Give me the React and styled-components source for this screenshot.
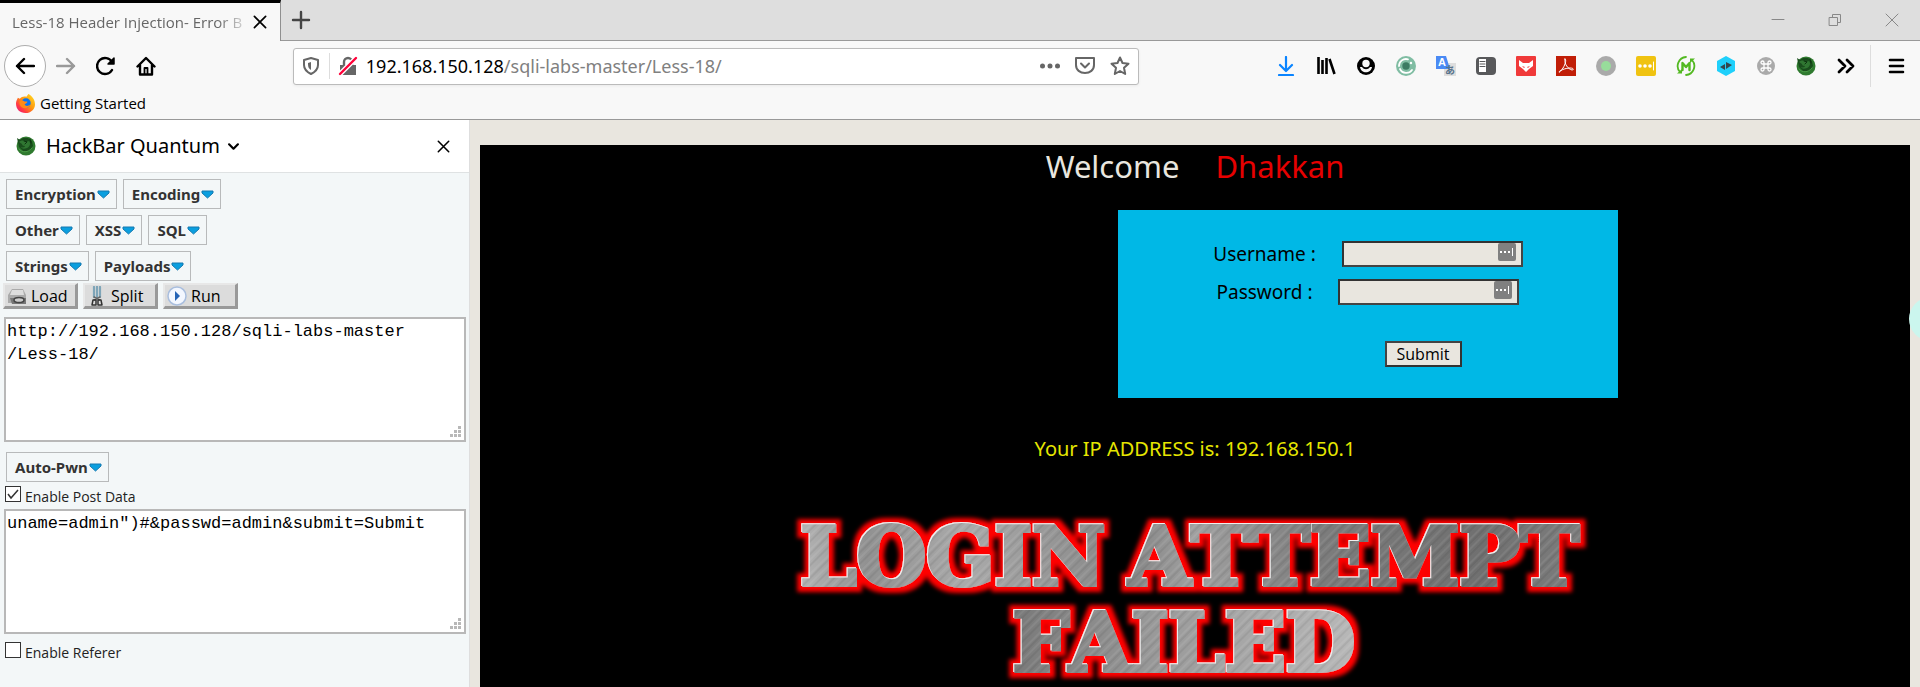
import React from "react";
import styled, { createGlobalStyle } from "styled-components";

const ui = '"Noto Sans", "Open Sans", sans-serif';

const Global = createGlobalStyle`
  *, *::before, *::after { box-sizing: border-box; }
  html, body, #root { height: 100%; }
  body { margin: 0; font-family: ${ui}; background: #f8f8f8; color: #000; overflow: hidden; }
  button { font: inherit; color: inherit; background: none; border: 0; padding: 0; margin: 0; }
  h1, h2, p { margin: 0; font-weight: 400; }
  svg { display: block; flex: none; }
`;

const Window = styled.div`
  height: 100vh;
  display: flex;
  flex-direction: column;
`;

/* tab strip */
const TabStrip = styled.header`
  display: flex;
  height: 41px;
  flex: none;
  background: #dedede;
`;
const Tab = styled.div`
  display: flex;
  align-items: center;
  width: 281px;
  border-top: 3px solid #000;
  border-right: 1px solid #8f8f8f;
  background: #f8f8f8;
  padding: 0 10px 0 12px;
`;
const TabTitle = styled.span`
  flex: 1;
  white-space: nowrap;
  font-family: "Open Sans", sans-serif;
  font-size: 15px;
  line-height: 24px;
  color: #666;
  mask-image: linear-gradient(to right, #000 205px, transparent 240px);
`;
const StripRest = styled.div`
  flex: 1;
  display: flex;
  align-items: center;
  justify-content: space-between;
  border-bottom: 1px solid #999;
  padding: 0 18px 0 10px;
`;
const WindowControls = styled.div`
  display: flex;
  gap: 37px;
`;
const IconButton = styled.button`
  display: flex;
  align-items: center;
  justify-content: center;
  width: 20px;
  height: 20px;
  flex: none;
`;

/* navigation bar */
const NavBar = styled.nav`
  display: flex;
  align-items: center;
  justify-content: space-between;
  height: 50px;
  flex: none;
  padding: 0 14px 0 4px;
`;
const NavButtons = styled.div`
  display: flex;
  align-items: center;
  gap: 20px;
`;
const BackButton = styled(IconButton)`
  width: 42px;
  height: 42px;
  border: 1px solid #adadad;
  border-radius: 50%;
  background: #fff;
  margin-right: -10px;
`;
const UrlBar = styled.div`
  display: flex;
  align-items: center;
  flex: none;
  width: 44.5%;
  height: 37px;
  padding: 0 8px 0 7px;
  gap: 8px;
  background: #fff;
  border: 1px solid #bbb;
  border-radius: 3px;
  box-shadow: 0 1px 3px rgba(0, 0, 0, 0.06);
`;
const Divider = styled.span`
  width: 1px;
  height: 26px;
  background: #ddd;
`;
const MenuDivider = styled(Divider)`
  height: 42px;
  margin: 0 -5px 0 -6px;
`;
const Address = styled.p`
  flex: 1;
  font-size: 18px;
  line-height: 26px;
  color: #808080;
  white-space: nowrap;
  strong { font-weight: 400; color: #000; }
`;
const UrlActions = styled.div`
  display: flex;
  gap: 15px;
`;
const Extensions = styled.div`
  display: flex;
  align-items: center;
  gap: 20px;
`;

const Bookmarks = styled.div`
  height: 29px;
  flex: none;
  padding: 0 16px;
  border-bottom: 1px solid #999;
`;
const Bookmark = styled.a`
  display: inline-flex;
  align-items: center;
  gap: 5px;
  font-family: "Open Sans", sans-serif;
  font-size: 15px;
  line-height: 24px;
  color: #000;
  text-decoration: none;
`;

const Body = styled.div`
  flex: 1;
  min-height: 0;
  display: flex;
`;

/* side panel */
const Sidebar = styled.aside`
  width: 470px;
  flex: none;
  border-right: 1px solid #dedede;
  background: #f3f7f8;
  overflow: hidden;
`;
const SidebarHeader = styled.div`
  display: flex;
  align-items: center;
  height: 53px;
  padding: 0 16px;
  gap: 10px;
  background: #fff;
  border-bottom: 1px solid #dfe2e3;
`;
const SidebarTitle = styled.button`
  display: flex;
  align-items: center;
  gap: 8px;
  flex: 1;
  font-size: 20px;
  line-height: 28px;
`;
const MenuRows = styled.div`
  display: flex;
  flex-direction: column;
  gap: 6px;
  padding: ${(p) => p.$top}px 6px 2px;
`;
const MenuRow = styled.div`
  display: flex;
  gap: 6px;
`;
const MenuButton = styled.button`
  display: flex;
  align-items: center;
  gap: 1px;
  height: 30px;
  padding: 0 6px 0 8px;
  border: 1px solid #b8babb;
  font-weight: 700;
  font-size: 15px;
  color: #333;
`;
const Actions = styled.div`
  display: flex;
  gap: 5px;
  padding: 0 3px;
`;
const ActionButton = styled.button`
  display: flex;
  align-items: center;
  gap: 4px;
  width: 75px;
  height: 26px;
  padding: 0 0 0 2px;
  background: #dcdcdc;
  border: 2px solid;
  border-color: #e8e8e8 #999 #999 #e8e8e8;
  border-width: 2px 3px 3px 2px;
  font-family: "Open Sans", sans-serif;
  font-size: 16px;
`;
const AreaWrap = styled.div`
  position: relative;
  margin: ${(p) => p.$top}px 3px 0 4px;
`;
const Area = styled.textarea`
  display: block;
  width: 100%;
  height: 125px;
  margin: 0;
  padding: 1px;
  border: 2px solid #b8b8b8;
  background: #fff;
  color: #000;
  resize: none;
  outline: none;
  font-family: "Liberation Mono", monospace;
  font-size: 17px;
  line-height: 23px;
`;
const Grip = styled.span`
  position: absolute;
  right: 4px;
  bottom: 4px;
`;
const Check = styled.label`
  display: flex;
  align-items: center;
  gap: 4px;
  padding-left: 5px;
  height: 24px;
  margin-top: ${(p) => p.$top || 0}px;
  font-family: "Open Sans", sans-serif;
  font-size: 14px;
  color: #222;
`;
const Box = styled.input`
  appearance: none;
  width: 16px;
  height: 16px;
  margin: 0 0 4px;
  border: 1px solid #333;
  background: #fff;
  &:checked {
    background: #fff url("data:image/svg+xml,%3Csvg xmlns='http://www.w3.org/2000/svg' viewBox='0 0 14 14'%3E%3Cpath d='M2 7l3 4L12 3' fill='none' stroke='%23333' stroke-width='1.5'/%3E%3C/svg%3E");
  }
`;

/* page */
const Viewport = styled.main`
  flex: 1;
  min-width: 0;
  overflow: hidden;
  padding: 25px 10px 0;
  background: #e9e6df;
  position: relative;
`;
const Page = styled.div`
  min-height: 100%;
  background: #000;
  display: flex;
  flex-direction: column;
`;
const Welcome = styled.h1`
  display: flex;
  justify-content: center;
  gap: 36px;
  font-size: 31px;
  line-height: 42px;
  color: #e9e6df;
`;
const Name = styled.span`
  color: #e60000;
`;
const LoginForm = styled.form`
  display: flex;
  flex-direction: column;
  gap: 12px;
  width: 500px;
  height: 188px;
  margin: 23px 0 0 calc(50% - 77px);
  padding-top: 31px;
  background: #00b8e6;
`;
const Field = styled.div`
  display: flex;
  align-items: center;
  justify-content: center;
  gap: 26px;
  height: 26px;
  font-size: 19px;
  label { white-space: nowrap; }
`;
const InputWrap = styled.span`
  position: relative;
  display: flex;
`;
const TextInput = styled.input`
  width: 181px;
  height: 26px;
  border: 2px solid;
  border-color: #333 #444 #444 #333;
  background: #e9e6df;
  outline: none;
`;
const Badge = styled.span`
  position: absolute;
  right: 7px;
  top: 2px;
`;
const Submit = styled.button`
  align-self: center;
  width: 77px;
  height: 26px;
  margin: 24px 0 0 110px;
  border: 2px solid;
  border-color: #444 #333 #333 #444;
  background: #e9e6df;
  font-family: "Open Sans", sans-serif;
  font-size: 16px;
  line-height: 20px;
`;
const Ip = styled.p`
  margin-top: 36px;
  text-align: center;
  font-size: 20px;
  line-height: 30px;
  color: #e6e600;
`;
const Banner = styled.div`
  display: flex;
  justify-content: center;
  margin-top: 36px;
  svg { overflow: visible; }
`;
const Bubble = styled.span`
  position: absolute;
  right: 0;
  top: 177px;
  width: 11px;
  height: 44px;
  overflow: hidden;
`;

const S = ({ s = 20, children, ...r }) => (
  <svg width={s} height={s} viewBox="0 0 20 20" fill="none" stroke="currentColor" strokeWidth="2.4" strokeLinecap="round" strokeLinejoin="round" aria-hidden="true" {...r}>{children}</svg>
);

const GreenFox = () => (
  <S stroke="none">
    <circle cx="10" cy="10" r="9.5" fill="#2f7a2f" />
    <path d="M1 2l3 2 3-2 5 0 4 3 1 5-4 5-6 0-4-4z" fill="#194d1c" />
    <path d="M3 6c2-2 5-2 7 0l3-1c2 2 1 6-2 7-3 1-5 1-6-1 2 1 4 0 4-1-2 0-3-1-3-2z" fill="#2f7631" />
    <path d="M8 5l3 1-2 2M14 3l1 4" stroke="#0d330f" strokeWidth="1" />
    <path d="M3 13c3 4 9 4 13-1" stroke="#4b9a48" strokeWidth="1" />
  </S>
);
const Firefox = () => (
  <S s={19} stroke="none">
    <defs>
      <linearGradient id="ff" x1="1" y1="0" x2="0" y2="1">
        <stop offset="0" stopColor="#ffe226" /><stop offset=".45" stopColor="#ff980e" /><stop offset=".75" stopColor="#ff3647" /><stop offset="1" stopColor="#e31587" />
      </linearGradient>
    </defs>
    <path d="M2 4l2 1c2-2 4-3 7-2l2-3c4 2 7 6 7 11 0 5-4 9-10 9S0 16 0 10c0-2 1-4 2-6z" fill="url(#ff)" />
    <circle cx="10.5" cy="9.5" r="5" fill="#0a74ef" />
    <path d="M4 7c2-1 4 0 5 1l3 0c0 2-2 2-3 3 1 2 4 2 6 0-1 4-6 5-9 3-2-2-3-4-2-7z" fill="#ff8a16" />
  </S>
);
const Close = ({ s = 14, w = 2.4 }) => <S s={s} strokeWidth={w}><path d="M2 2l16 16M18 2L2 18" /></S>;

const extensions = [
  ["Downloads", <S stroke="#0a84ff" strokeWidth="2.2"><path d="M10 1v13M4 9l6 6 6-6M3 19h14" /></S>],
  ["Library", <S strokeWidth="2.6" strokeLinecap="butt"><path d="M2.500 1v17M6.500 4v14M10.500 2v16M13.500 3l5 15" /></S>],
  ["Account", <S stroke="none"><circle cx="10" cy="10" r="9" fill="#000" /><circle cx="10" cy="7.5" r="3.7" fill="#f8f8f8" /><path d="M4 11c1 7 11 7 12 0h-2c-2 3-6 3-8 0z" fill="#f8f8f8" /></S>],
  ["Proxy", <S stroke="none"><circle cx="10" cy="10" r="10" fill="#80bda3" /><circle cx="10" cy="10" r="3.7" fill="#3c7c63" /><path d="M3 10a7 7 0 0 1 9-6.700M4 13a7 7 0 0 0 12 1" stroke="#fff" strokeWidth="1.8" /><circle cx="15" cy="7" r="1.2" fill="#fff" /></S>],
  ["Translate", <S stroke="none"><path d="M8 7h12v13H8z" fill="#dedede" /><path d="M0 0h10l4 13H0z" fill="#4a8af4" /><text x="2" y="10" fontSize="11" fontWeight="700" fill="#fff" fontFamily="Liberation Sans, sans-serif">A</text><text x="9" y="18" fontSize="10" fontWeight="700" fill="#58738c" fontFamily="Noto Sans CJK JP, sans-serif">あ</text></S>],
  ["Reader", <S stroke="none"><rect y="1" width="20" height="18" rx="4" fill="#58595b" /><path d="M3 3h7v13H3z" fill="#fff" /><path d="M4 5.500h5M4 8h5M4 10.500h5" stroke="#58595b" strokeWidth="1" /></S>],
  ["Fox", <S stroke="none"><rect width="20" height="20" rx="1" fill="#f03a3a" /><path d="M3 4l4 3h6l4-3v6l-4 3-3 3-3-3-4-3z" fill="#fff" /><path d="M6 10l3 1-1 1zM14 10l-3 1 1 1z" fill="#f03a3a" /></S>],
  ["PDF", <S stroke="none"><path d="M0 0h20v20H0z" fill="#c11e07" /><path d="M9 3c2 0 0 6-2 9s-4 5-4 4 6-4 11-4c4 0 4 2 2 2-4-1-8-6-7-11z" stroke="#fff" strokeWidth="1" /></S>],
  ["Status", <S stroke="none"><circle cx="10" cy="10" r="10" fill="#aaa" /><circle cx="10" cy="10" r="5" fill="#98dc9b" /></S>],
  ["Passwords", <S stroke="none"><rect width="20" height="20" rx="2" fill="#f0c311" /><circle cx="4" cy="10" r="1.8" fill="#fff" /><circle cx="9" cy="10" r="1.8" fill="#fff" /><circle cx="14" cy="10" r="1.8" fill="#fff" /><path d="M17.500 6v8" stroke="#fff" strokeWidth="1" /></S>],
  ["Markdown", <S stroke="#53b922" strokeWidth="1.8"><path d="M10 1a9 9 0 0 0-6 15M10 19a9 9 0 0 0 6-15" /><path d="M1 17.500h5V13zM19 2.500h-5V7z" fill="#53b922" stroke="none" /><path d="M6.500 14V7l3.500 4 3.500-4v7" strokeWidth="2.4" /></S>],
  ["Switch", <S stroke="none"><path d="M10 0l9 5v10l-9 5-9-5V5z" fill="#1fd0fb" /><path d="M9 8v6l-5-3zM10 6v7l6-4z" fill="#33474f" /></S>],
  ["Command", <S stroke="none"><circle cx="10" cy="10" r="9" fill="#aaa" /><path d="M8 8h4v4H8zM8 8H6.500A1.500 1.500 0 1 1 8 6.500zM12 8V6.500A1.500 1.500 0 1 1 13.500 8zM12 12h1.500a1.500 1.500 0 1 1-1.500 1.500zM8 12v1.500A1.500 1.500 0 1 1 6.500 12z" stroke="#fff" strokeWidth="1.3" /></S>],
  ["HackBar", <GreenFox />],
  ["More tools", <S strokeWidth="2.8"><path d="M3 4l6 6-6 6M11 4l6 6-6 6" /></S>],
];

const Arrow = () => (
  <svg width="13" height="9" viewBox="0 0 13 9" aria-hidden="true">
    <path d="M1 1h11v2L6.500 8 1 3z" fill="#0a9fdf" stroke="#1479b0" strokeWidth="1" strokeLinejoin="round" />
  </svg>
);
const menus = [["Encryption", "Encoding"], ["Other", "XSS", "SQL"], ["Strings", "Payloads"]];
const Menu = ({ children }) => <MenuButton type="button">{children}<Arrow /></MenuButton>;

const GripDots = () => (
  <Grip><svg width="12" height="12" fill="#b8b8b8" aria-hidden="true"><path d="M8 0h3v3H8zM4 4h3v3H4zM8 4h3v3H8zM0 8h3v3H0zM4 8h3v3H4zM8 8h3v3H8z" /></svg></Grip>
);
const PassBadge = () => (
  <Badge><svg width="18" height="18" aria-hidden="true"><rect width="18" height="18" rx="2" fill="#808080" /><path d="M2 8h2v2H2zM6 8h2v2H6zM10 8h2v2h-2zM14 5h1v8h-1z" fill="#fff" /></svg></Badge>
);

const FailedBanner = () => (
  <svg width="820" height="180" viewBox="0 0 820 180" role="img" aria-label="Login attempt failed">
    <defs>
      <linearGradient id="metal" gradientUnits="userSpaceOnUse" x1="0" y1="0" x2="820" y2="0">
        <stop offset="0" stopColor="#bbb" /><stop offset=".1" stopColor="#919191" /><stop offset=".22" stopColor="#aaa" /><stop offset=".42" stopColor="#858585" /><stop offset=".5" stopColor="#a0a0a0" /><stop offset=".65" stopColor="#7c7c7c" /><stop offset=".85" stopColor="#707070" /><stop offset="1" stopColor="#808080" />
      </linearGradient>
      <linearGradient id="metal2" gradientUnits="userSpaceOnUse" x1="220" y1="0" x2="590" y2="0">
        <stop offset="0" stopColor="#777" /><stop offset=".4" stopColor="#999" /><stop offset=".7" stopColor="#aaa" /><stop offset="1" stopColor="#bbb" />
      </linearGradient>
      <pattern id="brush" width="17" height="17" patternUnits="userSpaceOnUse" patternTransform="rotate(45)">
        <path d="M2 0v17M9 0v17" stroke="#fff" strokeOpacity=".14" />
        <path d="M5 0v17M13 0v17" stroke="#000" strokeOpacity=".12" />
      </pattern>
      <pattern id="steel" width="820" height="200" patternUnits="userSpaceOnUse">
        <rect width="820" height="100" fill="url(#metal)" />
        <rect y="100" width="820" height="100" fill="url(#metal2)" />
        <rect width="820" height="200" fill="url(#brush)" />
      </pattern>
      <filter id="glow" filterUnits="userSpaceOnUse" x="0" y="0" width="820" height="200">
        <feMorphology in="SourceAlpha" operator="dilate" radius="5" result="fat" />
        <feGaussianBlur in="fat" stdDeviation="2" result="soft" />
        <feFlood floodColor="#f00" />
        <feComposite in2="soft" operator="in" result="red" />
        <feOffset in="SourceAlpha" dx="-1" dy="-1" result="up" />
        <feFlood floodColor="#eee" />
        <feComposite in2="up" operator="in" result="edge" />
        <feMerge><feMergeNode in="red" /><feMergeNode in="edge" /><feMergeNode in="SourceGraphic" /></feMerge>
      </filter>
    </defs>
    <g fontFamily="DejaVu Serif, serif" fontWeight="700" fontSize="80" textAnchor="middle" fill="url(#steel)" stroke="url(#steel)" strokeWidth="4" style={{ fontKerning: "none" }} filter="url(#glow)">
      <text x="168" y="85">LOGIN</text>
      <text x="569" y="85">ATTEMPT</text>
      <text x="399" y="171">FAILED</text>
    </g>
  </svg>
);

export default function App() {
  return (
    <Window>
      <Global />
      <TabStrip>
        <Tab>
          <TabTitle>Less-18 Header Injection- Error B</TabTitle>
          <IconButton aria-label="Close tab"><Close /></IconButton>
        </Tab>
        <StripRest>
          <IconButton aria-label="New tab"><S stroke="#444"><path d="M10 2v16M2 10h16" /></S></IconButton>
          <WindowControls>
            <IconButton aria-label="Minimize"><S stroke="#888" strokeWidth="1"><path d="M4 9.500h12" /></S></IconButton>
            <IconButton aria-label="Restore"><S stroke="#888" strokeWidth="1"><path d="M4.500 7.500h8v8h-8zM7.500 7V4.500h8v8H13" /></S></IconButton>
            <IconButton aria-label="Close window"><S stroke="#888" strokeWidth="1"><path d="M4 4l12 12M16 4L4 16" /></S></IconButton>
          </WindowControls>
        </StripRest>
      </TabStrip>

      <NavBar>
        <NavButtons>
          <BackButton aria-label="Back"><S><path d="M19 10H2M9 3l-7 7 7 7" /></S></BackButton>
          <IconButton aria-label="Forward"><S stroke="#999"><path d="M1 10h17M11 3l7 7-7 7" /></S></IconButton>
          <IconButton aria-label="Reload"><S><path d="M16 14a8 8 0 1 1 0-8" /><path d="M18 2v6h-6z" fill="currentColor" strokeWidth="1.5" /></S></IconButton>
          <IconButton aria-label="Home"><S><path d="M1.500 10.500L10 2l8.500 8.500M4 9v9.500h12V9" /><path d="M8.500 18v-6h3v6" strokeWidth="1.8" /></S></IconButton>
        </NavButtons>
        <UrlBar>
          <S stroke="#666"><path d="M10 2l7 2v5c0 5-3 7-7 9-4-2-7-4-7-9V4z" strokeWidth="2" /><path d="M10 6v8c-3-2-3-4-3-7z" fill="#666" stroke="none" /></S>
          <Divider />
          <S stroke="none"><path d="M2 9h16v10H2z" fill="#666" /><path d="M6 9V6a4 4 0 0 1 8 0v3" stroke="#666" /><path d="M2 18L18 2" stroke="#fff" strokeWidth="5" /><path d="M2 18L18 2" stroke="#ff0039" strokeWidth="2.4" /></S>
          <Address><strong>192.168.150.128</strong>/sqli-labs-master/Less-18/</Address>
          <UrlActions>
            <IconButton aria-label="Page actions"><S stroke="none" fill="#666"><circle cx="2.5" cy="10" r="2.5" /><circle cx="10" cy="10" r="2.5" /><circle cx="17.5" cy="10" r="2.5" /></S></IconButton>
            <IconButton aria-label="Save to Pocket"><S stroke="#666" strokeWidth="2"><path d="M1 2h18v7c0 5-4 8-9 8s-9-3-9-8z" /><path d="M6 7.500l4 4 4-4" /></S></IconButton>
            <IconButton aria-label="Bookmark"><S stroke="#666" strokeWidth="2"><path d="M10 1.500l2.500 5.500 6 .7-4.500 4 1.200 6.300L10 15l-5.200 3L6 11.700l-4.500-4 6-.7z" /></S></IconButton>
          </UrlActions>
        </UrlBar>
        <Extensions>
          {extensions.map(([label, icon]) => <IconButton key={label} aria-label={label}>{icon}</IconButton>)}
          <MenuDivider />
          <IconButton aria-label="Menu"><S strokeWidth="2.6"><path d="M4 4h13M4 10h13M4 16h13" /></S></IconButton>
        </Extensions>
      </NavBar>

      <Bookmarks>
        <Bookmark href="#"><Firefox />Getting Started</Bookmark>
      </Bookmarks>

      <Body>
        <Sidebar>
          <SidebarHeader>
            <GreenFox />
            <SidebarTitle>HackBar Quantum<S s={11} strokeWidth="4"><path d="M2 6l8 8 8-8" /></S></SidebarTitle>
            <IconButton aria-label="Close sidebar"><Close s={13} /></IconButton>
          </SidebarHeader>
          <MenuRows $top={6}>
            {menus.map((row) => (
              <MenuRow key={row[0]}>{row.map((m) => <Menu key={m}>{m}</Menu>)}</MenuRow>
            ))}
          </MenuRows>
          <Actions>
            <ActionButton type="button">
              <S stroke="none"><path d="M5 3h11l3 6v8H1V9z" fill="#aaa" /><path d="M5 4h11l1 5H3z" fill="#ddd" /><path d="M3 12h16v6H5z" fill="#777" /><ellipse cx="12" cy="14" rx="5" ry="2.5" stroke="#444" strokeWidth="1.5" fill="#ccc" /></S>Load
            </ActionButton>
            <ActionButton type="button">
              <S strokeWidth="1.5"><path d="M7 1v10M10 0v11M13 1v10" stroke="#7fa5b8" strokeWidth="2.2" /><path d="M7 11l6 3M13 11l-6 3" stroke="#666" /><path d="M6 14h3v5H5zM11 14h3l1 5h-4z" stroke="#333" /></S>Split
            </ActionButton>
            <ActionButton type="button">
              <S stroke="none"><circle cx="10" cy="10" r="9" fill="#f3f7ff" stroke="#a9bede" strokeWidth="1.5" /><path d="M8 5l5 5-5 5z" fill="#2463b5" /></S>Run
            </ActionButton>
          </Actions>
          <AreaWrap $top={8}>
            <Area aria-label="URL" spellCheck={false} defaultValue={"http://192.168.150.128/sqli-labs-master\n/Less-18/"} />
            <GripDots />
          </AreaWrap>
          <MenuRows $top={10}>
            <MenuRow><Menu>Auto-Pwn</Menu></MenuRow>
          </MenuRows>
          <Check><Box type="checkbox" defaultChecked />Enable Post Data</Check>
          <AreaWrap $top={1}>
            <Area aria-label="Post data" spellCheck={false} defaultValue={'uname=admin")#&passwd=admin&submit=Submit'} />
            <GripDots />
          </AreaWrap>
          <Check $top={6}><Box type="checkbox" />Enable Referer</Check>
        </Sidebar>

        <Viewport>
          <Page>
            <Welcome>Welcome<Name>Dhakkan</Name></Welcome>
            <LoginForm onSubmit={(e) => e.preventDefault()}>
              <Field>
                <label htmlFor="uname">Username :</label>
                <InputWrap><TextInput id="uname" type="text" /><PassBadge /></InputWrap>
              </Field>
              <Field>
                <label htmlFor="passwd">Password :</label>
                <InputWrap><TextInput id="passwd" type="password" /><PassBadge /></InputWrap>
              </Field>
              <Submit type="submit">Submit</Submit>
            </LoginForm>
            <Ip>Your IP ADDRESS is: 192.168.150.1</Ip>
            <Banner><FailedBanner /></Banner>
          </Page>
          <Bubble><svg width="44" height="44" aria-hidden="true"><circle cx="22" cy="22" r="22" fill="#cbf6ee" /></svg></Bubble>
        </Viewport>
      </Body>
    </Window>
  );
}
